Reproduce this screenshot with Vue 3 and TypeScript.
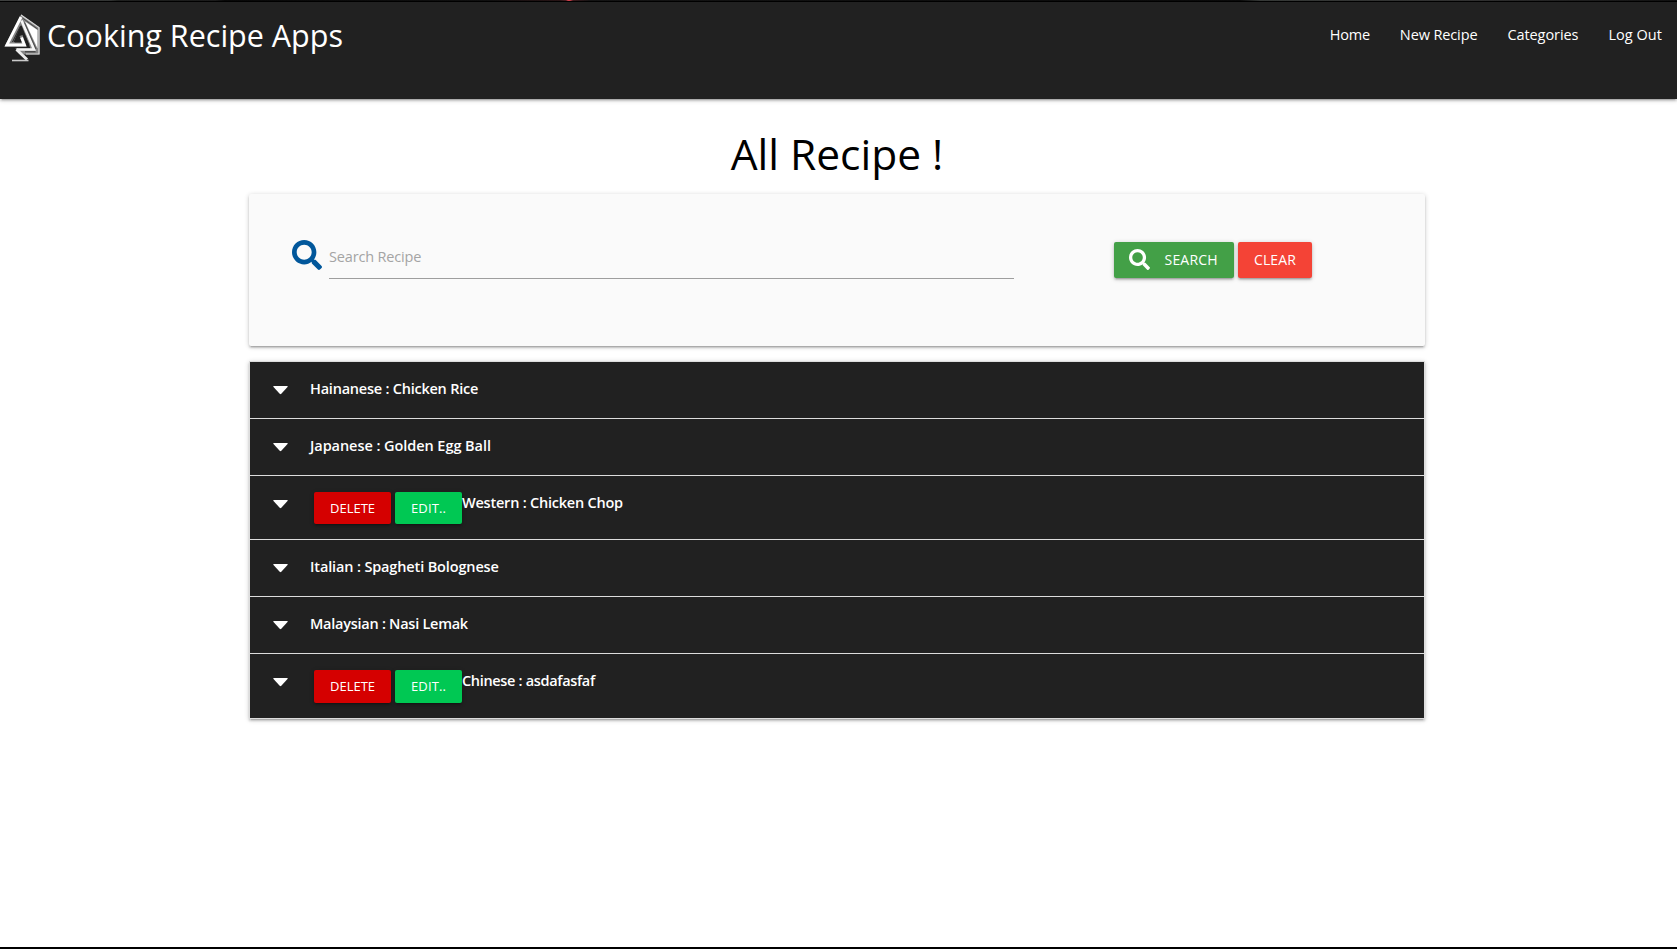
<script setup lang="ts">
interface NavLink { label: string; tracking: number }
interface Recipe { category: string; name: string; owned: boolean; tracking: number }

const links: NavLink[] = [
  { label: 'Home', tracking: -0.22 },
  { label: 'New Recipe', tracking: -0.12 },
  { label: 'Categories', tracking: -0.08 },
  { label: 'Log Out', tracking: 0.05 },
]

const recipes: Recipe[] = [
  { category: 'Hainanese', name: 'Chicken Rice', owned: false, tracking: -0.23 },
  { category: 'Japanese', name: 'Golden Egg Ball', owned: false, tracking: -0.06 },
  { category: 'Western', name: 'Chicken Chop', owned: true, tracking: -0.22 },
  { category: 'Italian', name: 'Spagheti Bolognese', owned: false, tracking: -0.14 },
  { category: 'Malaysian', name: 'Nasi Lemak', owned: false, tracking: -0.26 },
  { category: 'Chinese', name: 'asdafasfaf', owned: true, tracking: -0.33 },
]
const searchPath = 'M505 442.7L405.3 343c-4.500-4.500-10.600-7-17-7H372c27.600-35.300 44-79.700 44-128C416 93.100 322.900 0 208 0S0 93.100 0 208s93.100 208 208 208c48.300 0 92.700-16.400 128-44v16.300c0 6.400 2.500 12.500 7 17l99.700 99.700c9.400 9.400 24.600 9.400 33.900 0l28.300-28.300c9.400-9.400 9.400-24.600.1-34zM208 336c-70.700 0-128-57.200-128-128 0-70.700 57.200-128 128-128 70.700 0 128 57.200 128 128 0 70.700-57.200 128-128 128z'
</script>

<template>
  <div class="page">
    <div class="edge"></div>
    <nav class="nav">
      <a class="brand">
        <svg class="logo" viewBox="0 0 36 50" aria-hidden="true">
          <path d="M17.200 1.500 35.500 14.500V41.500H20L11 35.500H26.500L17 12 9.500 29H18L15.500 23 18.500 22 22.500 33.500H.5Z" fill="#858585" />
          <path d="M17 4 2.800 32H20.500L17.500 24.500" fill="none" stroke="#fff" stroke-width="2.800" />
          <path d="M17.500 7.500 30 36.500H12.500" fill="none" stroke="#f5f5f5" stroke-width="2.600" />
          <path d="M16.500 13 8.500 29" fill="none" stroke="#212121" stroke-width="1" />
          <path d="M17 13 25 32.500" fill="none" stroke="#212121" stroke-width="1.200" />
          <path d="M17 17 10.500 29.500H17.500L14.500 23Z" fill="#212121" />
          <path d="M21 8.500 33.500 17V35.500Z" fill="#fff" />
          <path d="M18.500 5 33.500 16M20.500 9.500 32 36" fill="none" stroke="#3b3b3b" stroke-width=".8" />
          <path d="M17 2 35 14.500V41H22" fill="none" stroke="#d8d8d8" stroke-width="1.200" />
          <path d="M21 38.800H31.500" fill="none" stroke="#333" stroke-width="1" />
          <path d="M12.500 36.500 23 46.500" fill="none" stroke="#ececec" stroke-width="3" />
          <path d="M8 47.500H24.500" fill="none" stroke="#c9c9c9" stroke-width="1.600" />
        </svg>
        <span>Cooking Recipe Apps</span>
      </a>
      <div class="links">
        <a v-for="l in links" :key="l.label" :style="{ letterSpacing: l.tracking + 'px' }">{{ l.label }}</a>
      </div>
    </nav>

    <main class="container">
      <h3>All Recipe !</h3>
      <form class="panel" @submit.prevent>
        <svg class="prefix" viewBox="0 0 512 512" aria-hidden="true"><path :d="searchPath" fill="#01579b" /></svg>
        <input type="text" placeholder="Search Recipe" />
        <div class="actions">
          <button class="btn search" type="submit">
            <svg viewBox="0 0 512 512" aria-hidden="true"><path :d="searchPath" fill="#fff" /></svg>
            <span>SEARCH</span>
          </button>
          <button class="btn clear" type="button">CLEAR</button>
        </div>
      </form>

      <ul class="recipes">
        <li v-for="r in recipes" :key="r.name" :class="{ owned: r.owned }">
          <svg class="caret" viewBox="0 0 15 9" aria-hidden="true"><path d="M.8 0H14.200Q15.100.3 14.500 1.100L8.300 7.800Q7.500 8.500 6.700 7.800L.5 1.100Q-.1.300.8 0Z" fill="#fff" /></svg>
          <div v-if="r.owned" class="tools">
            <button class="btn small delete">DELETE</button>
            <button class="btn small edit">EDIT..</button>
          </div>
          <b :style="{ letterSpacing: r.tracking + 'px' }">{{ r.category }} : {{ r.name }}</b>
        </li>
      </ul>
    </main>
    <div class="bottom"></div>
  </div>
</template>

<style>
body { background: #fff; }
</style>

<style scoped>
.page, .page * { box-sizing: border-box; }
.page {
  display: flex;
  flex-direction: column;
  height: 949px;
  overflow: hidden;
  font-family: "Open Sans", "Noto Sans", sans-serif;
  font-size: 14.5px;
  line-height: 22.5px;
}
.edge {
  flex: none;
  height: 2px;
  border-bottom: 1px solid #000;
  background: linear-gradient(90deg, #414342 0, #343635 110px, #202220 118px, #1c1c1c 215px, #090909 225px, #111 490px, #2a1516 560px, #512025 566px, #d9424e 568px, #d9424e 570px, #401b1e 573px, #151515 590px, #0b0b0b 1240px, #383b39 1260px, #333 1470px, #111 1677px);
}
.nav {
  flex: none;
  display: flex;
  justify-content: space-between;
  align-items: flex-start;
  height: 97px;
  background: #212121;
  color: #fff;
  box-shadow: 0 2px 2px rgba(0, 0, 0, .14), 0 3px 1px -2px rgba(0, 0, 0, .12), 0 1px 5px rgba(0, 0, 0, .2);
}
.brand {
  display: flex;
  padding-left: 4px;
  font-size: 30.5px;
  line-height: 67px;
}
.logo { width: 36px; height: 50px; margin-top: 11px; margin-right: 7px; }
.links { display: flex; }
.links a { padding: 0 15px; line-height: 65px; }
.container { width: 1176px; margin: 0 auto 0 249px; }
h3 {
  margin: 25px 0 11px;
  font-size: 42.5px;
  line-height: 59px;
  font-weight: 400;
  text-align: center;
}
.panel {
  display: flex;
  align-items: flex-start;
  height: 152px;
  padding: 46px 0 0 43px;
  border-radius: 2px;
  background: #fafafa;
  box-shadow: 0 2px 2px rgba(0, 0, 0, .14), 0 3px 1px -2px rgba(0, 0, 0, .12), 0 1px 5px rgba(0, 0, 0, .2);
}
.prefix { width: 30px; height: 30px; margin-right: 7px; }
input {
  width: 685px;
  height: 39px;
  margin: 0 100px 0 0;
  padding: 0 0 5px;
  border: 0;
  border-bottom: 1px solid #9e9e9e;
  outline: 0;
  background: transparent;
  font: inherit;
  letter-spacing: -.16px;
}
input::placeholder { color: #a4a4a4; opacity: 1; }
.actions { display: flex; gap: 4px; padding-top: 2px; }
.btn {
  flex: none;
  height: 36px;
  padding: 0;
  border: 0;
  border-radius: 2px;
  color: #fff;
  font: 14px/36px "Open Sans", "Noto Sans", sans-serif;
  box-shadow: 0 2px 2px rgba(0, 0, 0, .14), 0 3px 1px -2px rgba(0, 0, 0, .12), 0 1px 5px rgba(0, 0, 0, .2);
}
.search {
  display: flex;
  align-items: flex-start;
  width: 120px;
  padding-left: 15px;
  background: #43a047;
  letter-spacing: .2px;
}
.search svg { width: 21px; height: 21px; margin: 7px 14.500px 0 0; }
.search span { line-height: 35px; }
.clear { width: 74px; background: #f44336; letter-spacing: .12px; line-height: 35px; padding-bottom: 1px; }
.recipes {
  margin: 15px 0 0;
  padding: 0;
  list-style: none;
  border: 1px solid #ddd;
  border-bottom: 0;
  background: #212121;
  color: #fff;
  box-shadow: 0 2px 2px rgba(0, 0, 0, .14), 0 3px 1px -2px rgba(0, 0, 0, .12), 0 1px 5px rgba(0, 0, 0, .2);
}
.recipes li {
  display: flex;
  align-items: flex-start;
  height: 57px;
  padding: 16px 0 0 22.500px;
  border-bottom: 1px solid #ddd;
}
.recipes li.owned { height: 64px; }
.recipes li.owned:last-child { height: 65px; }
.caret { width: 15px; height: 9px; margin: 8px 22.500px 0 0; }
.recipes b { font-weight: 600; white-space: pre; }
.tools { display: flex; gap: 4px; margin-left: 4px; }
.small { height: 32px; font-size: 13px; line-height: 32px; }
li:last-child .small { height: 33px; padding-bottom: 2px; }
.delete { width: 77px; background: #d50000; }
.edit { width: 67px; background: #00c853; letter-spacing: .1px; }
.bottom { flex: none; height: 2px; margin-top: auto; background: #000; }
</style>
